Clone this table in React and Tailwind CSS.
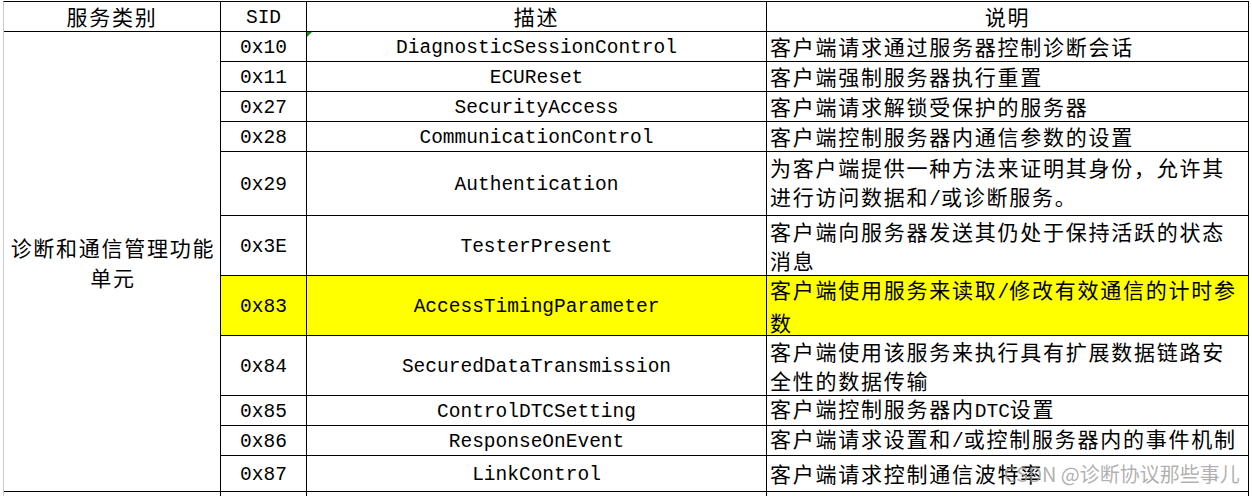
import React from "react";

const rows = [
  { sid: "0x10", name: "DiagnosticSessionControl", desc: ["客户端请求通过服务器控制诊断会话"], mark: true },
  { sid: "0x11", name: "ECUReset", desc: ["客户端强制服务器执行重置"] },
  { sid: "0x27", name: "SecurityAccess", desc: ["客户端请求解锁受保护的服务器"] },
  { sid: "0x28", name: "CommunicationControl", desc: ["客户端控制服务器内通信参数的设置"] },
  { sid: "0x29", name: "Authentication", desc: ["为客户端提供一种方法来证明其身份，允许其", "进行访问数据和/或诊断服务。"] },
  { sid: "0x3E", name: "TesterPresent", desc: ["客户端向服务器发送其仍处于保持活跃的状态", "消息"] },
  { sid: "0x83", name: "AccessTimingParameter", desc: ["客户端使用服务来读取/修改有效通信的计时参", "数"], yellow: true },
  { sid: "0x84", name: "SecuredDataTransmission", desc: ["客户端使用该服务来执行具有扩展数据链路安", "全性的数据传输"] },
  { sid: "0x85", name: "ControlDTCSetting", desc: ["客户端控制服务器内DTC设置"] },
  { sid: "0x86", name: "ResponseOnEvent", desc: ["客户端请求设置和/或控制服务器内的事件机制"] },
  { sid: "0x87", name: "LinkControl", desc: ["客户端请求控制通信波特率"] },
];

function Mixed({ text }) {
  return text.split(/([\x00-\x7f]+)/).map((p, i) =>
    /^[\x00-\x7f]+$/.test(p) ? (
      <span key={i} className="font-['Liberation_Mono',monospace] text-[19.5px] tracking-normal">
        {p}
      </span>
    ) : (
      <React.Fragment key={i}>{p}</React.Fragment>
    )
  );
}

const mono = "font-['Liberation_Mono','Noto_Sans_CJK_SC',monospace] text-[19.5px] text-black pt-[4px]";
const cjk = "font-['Noto_Sans_CJK_SC',sans-serif] text-[21px] tracking-[1.75px] text-black";

export default function App() {
  return (
    <div className="relative w-[1252px] h-[496px] bg-white overflow-hidden pt-px pl-[3px]">
      <div className="grid w-[1246px] grid-cols-[216px_85px_459px_481px] grid-rows-[29px_29px_29px_29px_29px_63px_59px_59px_59px_29px_29px_35px_4px] gap-px bg-black border-t border-t-black border-r border-r-black border-l border-l-[#c6cbdb]">
        {/* header */}
        <div className={`bg-white flex items-center justify-center leading-none ${cjk}`}>服务类别</div>
        <div className={`bg-white flex items-center justify-center leading-none ${mono}`}>SID</div>
        <div className={`bg-white flex items-center justify-center leading-none ${cjk}`}>描述</div>
        <div className={`bg-white flex items-center justify-center leading-none ${cjk}`}>说明</div>

        {/* merged left cell */}
        <div className={`bg-white row-start-2 row-end-13 col-start-1 flex items-center justify-center text-center leading-[30px] ${cjk} tracking-[1.4px] pl-[2px]`}>
          诊断和通信管理功能单元
        </div>

        {rows.map((r) => {
          const bg = r.yellow ? "bg-[#ffff00]" : "bg-white";
          return (
            <React.Fragment key={r.sid}>
              <div className={`${bg} col-start-2 flex items-center justify-center leading-none ${mono}`}>{r.sid}</div>
              <div className={`${bg} relative flex items-center justify-center leading-none whitespace-nowrap ${mono}`}>
                {r.mark && (
                  <svg className="absolute left-0 top-0" width="5" height="5" viewBox="0 0 5 5">
                    <polygon points="0,0 5,0 0,5" fill="#1a8a1a" />
                  </svg>
                )}
                {r.name}
              </div>
              <div className={`${bg} flex flex-col justify-center pl-[3px] leading-[29px] whitespace-nowrap ${cjk}`}>
                {r.desc.map((line, i) => (
                  <div key={i}>
                    <Mixed text={line} />
                  </div>
                ))}
              </div>
            </React.Fragment>
          );
        })}

        {/* trailing partial row */}
        <div className="bg-white col-start-1 row-start-13" />
        <div className="bg-white row-start-13" />
        <div className="bg-white row-start-13" />
        <div className="bg-white row-start-13" />
      </div>

      <div className="absolute left-[1004px] top-[461px] font-['Noto_Sans_CJK_SC',sans-serif] text-[20px] leading-[26px] text-[rgba(150,150,150,0.75)] whitespace-nowrap">
        CSDN @诊断协议那些事儿
      </div>
    </div>
  );
}
